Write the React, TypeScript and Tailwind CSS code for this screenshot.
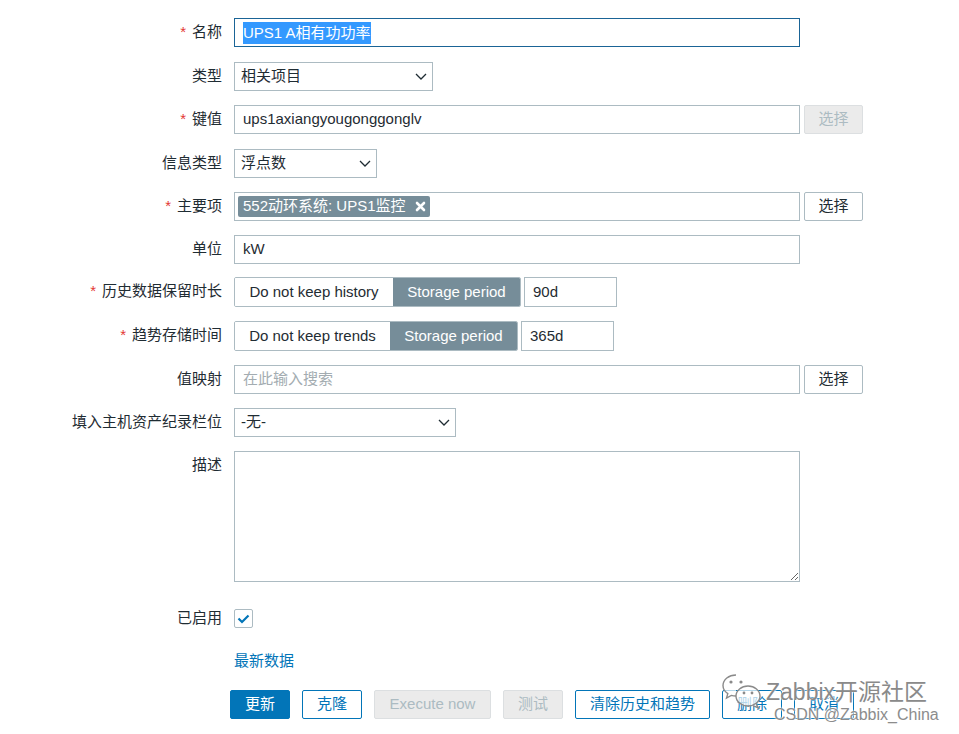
import React from "react";

const FONT = "font-['Liberation_Sans','Noto_Sans_CJK_SC',sans-serif]";

function Chevron() {
    return (
        <svg width="12" height="7" viewBox="0 0 12 7" fill="none">
            <path d="M1 1l5 5 5-5" stroke="#1f2c33" strokeWidth="1.3" />
        </svg>
    );
}

function Row({ label, req, className = "", children }: { label: string; req?: boolean; className?: string; children: React.ReactNode }) {
    return (
        <div className={"flex items-start " + className}>
            <div className="w-[234px] h-[29px] pr-3 flex items-center justify-end whitespace-nowrap">
                {req && <span className="text-[#e33734] mr-[6px]">*</span>}
                <span>{label}</span>
            </div>
            <div className="flex items-start gap-1">{children}</div>
        </div>
    );
}

function Select({ value, width }: { value: string; width: string }) {
    return (
        <div className={"h-[29px] border border-[#acbbc2] bg-white pl-[6px] pr-[5px] flex items-center justify-between " + width}>
            <span>{value}</span>
            <Chevron />
        </div>
    );
}

function PickButton({ disabled }: { disabled?: boolean }) {
    return disabled ? (
        <div className="w-[59px] h-[29px] rounded-[2px] border border-[#dcdfe1] bg-[#ebebeb] text-[#acbbc2] flex items-center justify-center">选择</div>
    ) : (
        <div className="w-[59px] h-[29px] rounded-[2px] border border-[#acbbc2] bg-white flex items-center justify-center">选择</div>
    );
}

function Segmented({ first, input, firstW, secondW }: { first: string; input: string; firstW: string; secondW: string }) {
    return (
        <div className="flex items-center gap-[3px]">
            <div className="flex h-[30px] border border-[#acbbc2] rounded-[2px] overflow-hidden">
                <div className={"flex items-center justify-center bg-white " + firstW}>{first}</div>
                <div className={"flex items-center justify-center bg-[#768d99] text-white " + secondW}>Storage period</div>
            </div>
            <div className="w-[93px] h-[30px] border border-[#acbbc2] px-2 flex items-center">{input}</div>
        </div>
    );
}

function Btn({ label, w, kind }: { label: string; w: string; kind: "primary" | "normal" | "disabled" }) {
    const cls =
        kind === "primary"
            ? "bg-[#0275b8] border-[#0275b8] text-white"
            : kind === "disabled"
            ? "bg-[#ebebeb] border-[#dcdfe1] text-[#acbbc2]"
            : "bg-white border-[#0275b8] text-[#0275b8]";
    return <div className={"h-[29px] rounded-[2px] border flex items-center justify-center " + w + " " + cls}>{label}</div>;
}

export default function App() {
    return (
        <div className={"relative w-[959px] h-[734px] bg-white text-[15px] text-[#1f2c33] overflow-hidden " + FONT}>
            <div className="flex flex-col gap-[14px] pt-[18px]">
                <Row label="名称" req>
                    <div className="w-[566px] h-[29px] border border-[#1a6496] px-2 flex items-center">
                        <span className="bg-[#3399ff] text-white leading-[22px]">UPS1 A相有功功率</span>
                    </div>
                </Row>
                <Row label="类型" className="mt-[1px]">
                    <Select value="相关项目" width="w-[199px]" />
                </Row>
                <Row label="键值" req>
                    <div className="w-[566px] h-[29px] border border-[#acbbc2] px-2 flex items-center">ups1axiangyougonggonglv</div>
                    <PickButton disabled />
                </Row>
                <Row label="信息类型" className="mt-[1px]">
                    <Select value="浮点数" width="w-[143px]" />
                </Row>
                <Row label="主要项" req>
                    <div className="w-[566px] h-[29px] border border-[#acbbc2] px-[3px] flex items-center">
                        <div className="h-[21px] rounded-[2px] bg-[#768d99] text-white pl-[5px] pr-[4px] flex items-center gap-[9px]">
                            <span>552动环系统: UPS1监控</span>
                            <svg width="11" height="11" viewBox="0 0 11 11">
                                <path d="M2 2l7 7M9 2l-7 7" stroke="white" strokeWidth="2.6" strokeLinecap="round" />
                            </svg>
                        </div>
                    </div>
                    <PickButton />
                </Row>
                <Row label="单位">
                    <div className="w-[566px] h-[29px] border border-[#acbbc2] px-2 flex items-center">kW</div>
                </Row>
                <Row label="历史数据保留时长" req className="-mt-[1px]">
                    <Segmented first="Do not keep history" input="90d" firstW="w-[158px]" secondW="w-[127px]" />
                </Row>
                <Row label="趋势存储时间" req>
                    <Segmented first="Do not keep trends" input="365d" firstW="w-[155px]" secondW="w-[127px]" />
                </Row>
                <Row label="值映射">
                    <div className="w-[566px] h-[29px] border border-[#acbbc2] px-2 flex items-center text-[#a3acb1]">在此输入搜索</div>
                    <PickButton />
                </Row>
                <Row label="填入主机资产纪录栏位">
                    <Select value="-无-" width="w-[222px]" />
                </Row>
                <Row label="描述">
                    <textarea className="w-[566px] h-[131px] border border-[#acbbc2] outline-none" />
                </Row>
                <Row label="已启用" className="mt-[8px]">
                    <div className="h-[29px] flex items-center">
                        <div className="w-[19px] h-[19px] rounded-[2px] border border-[#acbbc2] flex items-center justify-center">
                            <svg width="13" height="10" viewBox="0 0 13 10" fill="none">
                                <path d="M1.5 4.5l3.5 3.5 6.5-6.5" stroke="#0275b8" strokeWidth="2.2" />
                            </svg>
                        </div>
                    </div>
                </Row>
                <Row label="">
                    <div className="h-[29px] flex items-center text-[#0275b8]">最新数据</div>
                </Row>
                <div className="flex gap-3 pl-[230px]">
                    <Btn label="更新" w="w-[60px]" kind="primary" />
                    <Btn label="克隆" w="w-[60px]" kind="normal" />
                    <Btn label="Execute now" w="w-[117px]" kind="disabled" />
                    <Btn label="测试" w="w-[60px]" kind="disabled" />
                    <Btn label="清除历史和趋势" w="w-[135px]" kind="normal" />
                    <Btn label="删除" w="w-[60px]" kind="normal" />
                    <Btn label="取消" w="w-[60px]" kind="normal" />
                </div>
            </div>

            <div className="absolute left-[722px] top-[674px] pointer-events-none">
                <svg width="46" height="36" viewBox="0 0 46 36" fill="none">
                    <path d="M14 1C6.8 1 1 5.7 1 11.5c0 3.3 1.9 6.2 4.8 8.1L4.5 24l4.8-2.6c1.5.4 3.1.6 4.7.6" stroke="#8a8a8a" strokeWidth="1.4" fill="white" fillOpacity="0.7" />
                    <ellipse cx="26" cy="22" rx="12" ry="10" stroke="#8a8a8a" strokeWidth="1.4" fill="white" fillOpacity="0.7" />
                    <path d="M34 30l2.5 4-5-2.2" stroke="#8a8a8a" strokeWidth="1.4" fill="white" />
                    <circle cx="9" cy="8" r="1.6" fill="#8a8a8a" />
                    <circle cx="19" cy="8" r="1.6" fill="#8a8a8a" />
                    <circle cx="22" cy="19" r="1.4" fill="#8a8a8a" />
                    <circle cx="30" cy="19" r="1.4" fill="#8a8a8a" />
                </svg>
            </div>
            <div className="absolute left-[766px] top-[677px] text-[23px] leading-[30px] text-[#8a8a8a] whitespace-nowrap pointer-events-none [text-shadow:0_0_2px_#fff,0_0_2px_#fff]">
                Zabbix开源社区
            </div>
            <div className="absolute left-[774px] top-[705px] text-[16px] leading-[20px] text-[#8c8c8c] whitespace-nowrap pointer-events-none [text-shadow:0_0_2px_#fff,0_0_2px_#fff]">
                CSDN @Zabbix_China
            </div>
        </div>
    );
}
